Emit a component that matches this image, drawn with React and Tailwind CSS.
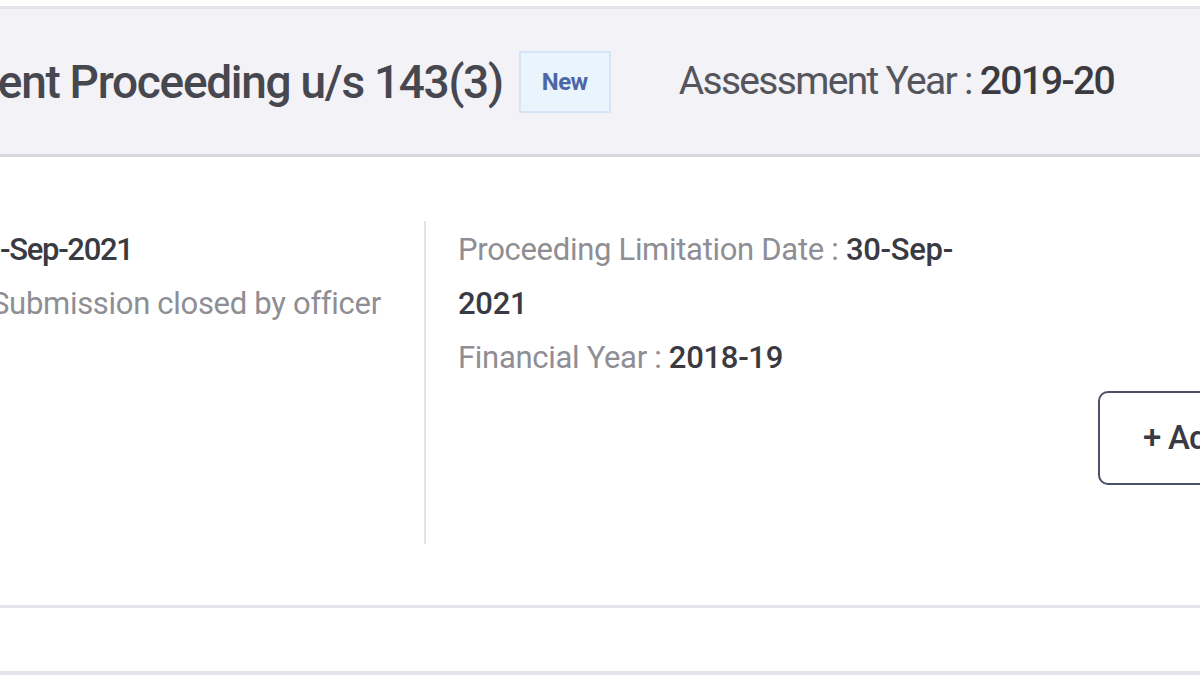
export default function App() {
  return (
    <div
      className="w-[1200px] h-[675px] overflow-hidden bg-white flex flex-col"
      style={{ fontFamily: 'Roboto, "Noto Sans", sans-serif' }}
    >
      <div className="h-[6px] shrink-0 bg-white" />
      <div className="shrink-0 h-[151px] bg-[#f2f2f7] border-t-[3px] border-b-[3px] border-t-[#e4e4ea] border-b-[#d9d9e0] flex items-center overflow-hidden whitespace-nowrap">
        <div className="shrink-0 ml-[-183px] text-[46px] font-medium text-[#47474f] tracking-[-1.3px] leading-none">
          Assessment Proceeding u/s 143(3)
        </div>
        <div className="shrink-0 ml-[16px] w-[92px] h-[62px] border-2 border-[#d3e5f6] bg-[#eaf4fc] flex items-center justify-center text-[24px] font-bold text-[#4d67a6] tracking-[-0.5px]">
          New
        </div>
        <div className="shrink-0 ml-[68px] text-[39px] leading-none tracking-[-1.7px] text-[#55555c]">
          Assessment Year : <span className="font-medium text-[#3a3a40]">2019-20</span>
        </div>
      </div>
      <div className="shrink-0 h-[448px] flex items-start pt-[64px] overflow-hidden whitespace-nowrap">
        <div className="w-[424px] shrink-0 pt-[2px] text-[31px] leading-[54px] tracking-[-0.3px]">
          <div className="font-medium text-[#3a3a42] tracking-[-1.3px]">-Sep-2021</div>
          <div className="ml-[-9px] text-[#8e8e94]">Submission closed by officer</div>
        </div>
        <div className="w-[2px] h-[323px] shrink-0 bg-[#e2e2e8]" />
        <div className="w-[540px] shrink-0 pl-[32px] pt-[2px] text-[31px] leading-[54px] tracking-[-0.3px] text-[#8e8e94] whitespace-normal">
          <div className="w-[500px]">
            Proceeding Limitation Date : <span className="font-medium text-[#3a3a42]">30-Sep-2021</span>
          </div>
          <div>
            Financial Year : <span className="font-medium text-[#3a3a42]">2018-19</span>
          </div>
        </div>
        <div className="ml-[132px] mt-[170px] shrink-0 h-[94px] px-[43px] border-2 border-[#4b4f68] rounded-[10px] flex items-center text-[33px] font-medium text-[#3a3a42] tracking-[-0.8px]">
          + Add Response
        </div>
      </div>
      <div className="shrink-0 h-[3px] bg-[#e4e4ea]" />
      <div className="shrink-0 h-[63px] bg-white" />
      <div className="shrink-0 h-[4px] bg-[#e4e4ea]" />
    </div>
  );
}
